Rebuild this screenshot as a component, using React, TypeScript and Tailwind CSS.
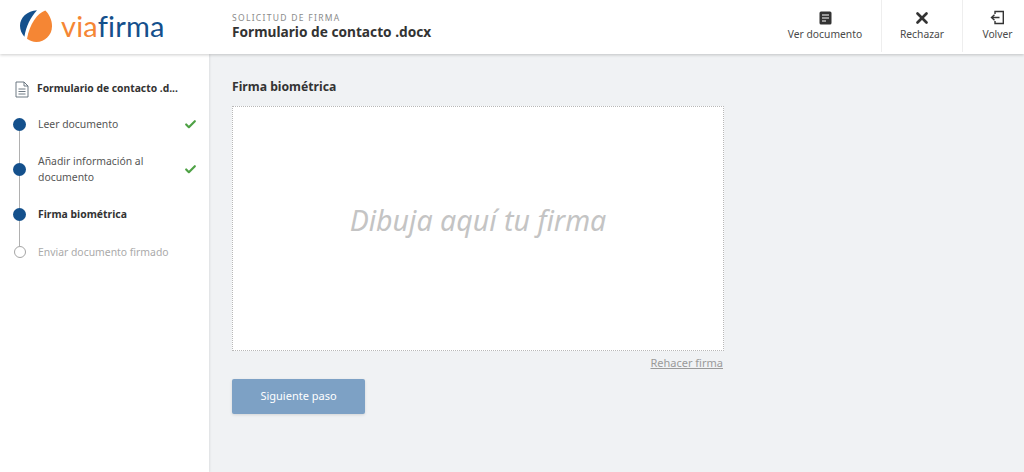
import { Check, X } from "lucide-react";

const steps = [
    { label: "Leer documento", state: "done", height: "h-[32px]" },
    { label: "Añadir información al documento", state: "done", height: "h-[58px]" },
    { label: "Firma biométrica", state: "current", height: "h-[32px]" },
    { label: "Enviar documento firmado", state: "todo", height: "h-[44px]" },
];

const Logo = () => (
    <div className="flex items-center gap-[9px]">
        <svg width="32" height="32" viewBox="0 0 32 32">
            <path d="M17 .3C7.500 .8 0 7.500 0 15.800c0 4.200 1.700 8 4.400 10.900C6 16.500 10.500 7.500 17 .3z" fill="#14508c" />
            <path d="M25.300 .6C17 3.500 9.800 14 7 28.800 9.500 30.800 12.800 32 16.300 32 25 32 32 25 32 16.300 32 10.500 29.500 4.500 25.300 .6z" fill="#f58634" />
        </svg>
        <div className="font-['Lato',sans-serif] text-[29px] leading-none tracking-[0.2px] font-normal mt-[-2px]">
            <span className="text-[#f58634]">via</span>
            <span className="text-[#14508c]">firma</span>
        </div>
    </div>
);

const HeaderButton = ({ icon, label, width }: { icon: React.ReactNode; label: string; width: string }) => (
    <div className={`flex flex-col items-center justify-start pt-[10px] h-[52px] border-l border-[#eeeeee] first:border-l-0 ${width}`}>
        <div className="h-[15px] flex items-center justify-center text-[#333333]">{icon}</div>
        <span className="text-[10.3px] leading-[14px] mt-[2px] text-[#4a4a4a]">{label}</span>
    </div>
);

const App = () => {
    return (
        <div className="w-[1024px] h-[472px] overflow-hidden flex flex-col bg-[#f0f2f4] font-['Noto_Sans',sans-serif]">
            <header className="relative z-10 h-[54px] shrink-0 bg-white shadow-[0_1px_3px_rgba(0,0,0,0.2)] flex items-start">
                <div className="w-[232px] pl-[20px] pt-[10px] shrink-0">
                    <Logo />
                </div>
                <div className="flex-1 pt-[12px]">
                    <div className="text-[8.5px] leading-[11px] tracking-[1.3px] text-[#8a8a8a]">SOLICITUD DE FIRMA</div>
                    <div className="text-[13.7px] leading-[18px] font-bold text-[#333333]">Formulario de contacto .docx</div>
                </div>
                <div className="flex">
                    <HeaderButton
                        width="w-[112px]"
                        label="Ver documento"
                        icon={
                            <svg width="13" height="14" viewBox="0 0 13 14">
                                <rect x="0.500" y="0.500" width="12" height="13" rx="1.500" fill="#333333" />
                                <path d="M3 4h7M3 7h7M3 10h4" stroke="#ffffff" strokeWidth="1.200" />
                            </svg>
                        }
                    />
                    <HeaderButton width="w-[81px]" label="Rechazar" icon={<X size={18} strokeWidth={3.600} />} />
                    <HeaderButton
                        width="w-[62px] pl-[8px]"
                        label="Volver"
                        icon={
                            <svg width="15" height="15" viewBox="0 0 15 15" fill="none" stroke="#333333" strokeWidth="1.400">
                                <path d="M5 4V1.500h8.300v12H5V11" />
                                <path d="M9.500 7.500H1.500M4.500 4.700 1.500 7.500l3 2.800" />
                            </svg>
                        }
                    />
                </div>
            </header>
            <div className="flex flex-1 min-h-0">
                <aside className="w-[209px] shrink-0 bg-white shadow-[1px_0_2px_rgba(0,0,0,0.08)] pl-[14px] pr-[12px] pt-[26px]">
                    <div className="flex items-center gap-[8px] h-[18px] pl-[1px]">
                        <svg width="14" height="17" viewBox="0 0 14 17" fill="none" stroke="#5f6b76" strokeWidth="0.900">
                            <path d="M1 1h8l4 4v11H1z" />
                            <path d="M9 1v4h4M3.500 8h7M3.500 10.500h7M3.500 13h7" />
                        </svg>
                        <span className="text-[10.3px] font-bold text-[#333333] whitespace-nowrap">Formulario de contacto .d...</span>
                    </div>
                    <div className="mt-[10px]">
                        {steps.map((step, index) => (
                            <div key={index} className={`flex items-center gap-[12px] -ml-[1px] ${step.height}`}>
                                <div className="w-[13px] h-full shrink-0 flex flex-col items-center">
                                    <div className={`flex-1 w-[1.500px] ${index === 0 ? "" : "bg-[#b0b0b0]"}`} />
                                    {step.state === "todo" ? (
                                        <div className="w-[12px] h-[12px] shrink-0 rounded-full border-[1.5px] border-[#a5a5a5] bg-white" />
                                    ) : (
                                        <div className="w-[13px] h-[13px] shrink-0 rounded-full bg-[#14508c]" />
                                    )}
                                    <div className={`flex-1 w-[1.500px] ${index === steps.length - 1 ? "" : "bg-[#b0b0b0]"}`} />
                                </div>
                                <span
                                    className={`text-[10.4px] leading-[16px] flex-1 ${
                                        step.state === "current"
                                            ? "font-bold text-[#333333]"
                                            : step.state === "todo"
                                              ? "text-[#aaaaaa] whitespace-nowrap"
                                              : "text-[#555555]"
                                    }`}
                                >
                                    {step.label}
                                </span>
                                {step.state === "done" && <Check size={13} strokeWidth={4} className="text-[#4ea145] shrink-0" />}
                            </div>
                        ))}
                    </div>
                </aside>
                <main className="flex-1 pl-[23px] pt-[24px]">
                    <h2 className="text-[12.2px] leading-[17px] font-bold text-[#333333]">Firma biométrica</h2>
                    <div className="w-[492px] h-[245px] mt-[11px] pb-[16px] bg-white border border-dotted border-[#b8b8b8] flex items-center justify-center">
                        <span className="text-[28.5px] italic text-[#c4c4c4]">Dibuja aquí tu firma</span>
                    </div>
                    <div className="w-[491px] flex justify-end mt-[4px]">
                        <span className="text-[11px] leading-[15px] text-[#9a9a9a] underline">Rehacer firma</span>
                    </div>
                    <button className="w-[133px] h-[35px] mt-[9px] rounded-[2px] bg-[#7da1c5] text-white text-[11px] shadow-[0_1px_3px_rgba(0,0,0,0.12)]">
                        Siguiente paso
                    </button>
                </main>
            </div>
        </div>
    );
};

export default App;
